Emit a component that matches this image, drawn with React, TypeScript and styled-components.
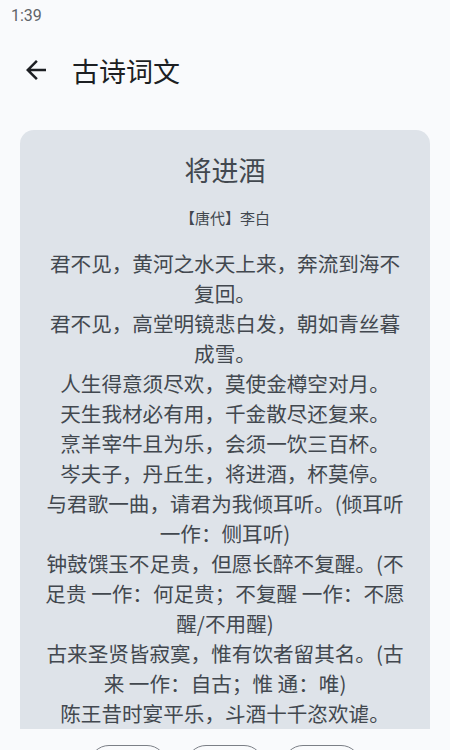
import styled, { createGlobalStyle } from "styled-components"

const GlobalStyle = createGlobalStyle`
  html, body {
    margin: 0;
    padding: 0;
    background: #f9fafc;
  }
`

const Root = styled.div`
  display: flex;
  flex-direction: column;
  width: 450px;
  height: 750px;
  overflow: hidden;
  background: #f9fafc;
  font-family: "Noto Sans CJK SC", "Noto Sans", sans-serif;
  & > * {
    flex-shrink: 0;
  }
`
const StatusBar = styled.div`
  height: 30px;
  display: flex;
  align-items: center;
  padding-left: 11px;
  font-family: Roboto, "Noto Sans", sans-serif;
  font-size: 16px;
  color: #606368;
`
const Toolbar = styled.div`
  height: 80px;
  display: flex;
  align-items: center;
  gap: 20px;
  padding-left: 20px;
`
const BackButton = styled.button`
  display: flex;
  align-items: center;
  justify-content: center;
  width: 32px;
  height: 32px;
  padding: 0;
  border: none;
  background: none;
  color: #1d1f23;
`
const PageTitle = styled.h1`
  margin: 0;
  font-size: 27px;
  font-weight: 400;
  color: #1d1f23;
`
const ScrollArea = styled.div`
  margin: 20px 20px 0;
  height: 599px;
  overflow: hidden;
`
const Card = styled.article`
  background: #dee3e9;
  border-radius: 14px;
  padding: 20px 24px 24px;
  text-align: center;
  color: #42484f;
`
const PoemTitle = styled.h2`
  margin: 0;
  font-size: 27px;
  line-height: 40px;
  font-weight: 400;
`
const Byline = styled.div`
  margin-top: 18px;
  font-size: 15px;
  line-height: 20px;
`
const Verse = styled.p`
  margin: 20px 0 0;
  font-size: 20.6px;
  line-height: 30px;
  white-space: pre-line;
`
const Actions = styled.div`
  display: flex;
  justify-content: center;
  gap: 19px;
  padding-top: 16px;
`
const Action = styled.button`
  width: 78px;
  height: 40px;
  border: 1px solid #7b7f86;
  border-radius: 20px;
  background: none;
  font-family: inherit;
  font-size: 14px;
  color: #3b4048;
`

const poem = [
  "君不见，黄河之水天上来，奔流到海不复回。",
  "君不见，高堂明镜悲白发，朝如青丝暮成雪。",
  "人生得意须尽欢，莫使金樽空对月。",
  "天生我材必有用，千金散尽还复来。",
  "烹羊宰牛且为乐，会须一饮三百杯。",
  "岑夫子，丹丘生，将进酒，杯莫停。",
  "与君歌一曲，请君为我倾耳听。(倾耳听 一作：侧耳听)",
  "钟鼓馔玉不足贵，但愿长醉不复醒。(不足贵 一作：何足贵；不复醒 一作：不愿醒/不用醒)",
  "古来圣贤皆寂寞，惟有饮者留其名。(古来 一作：自古；惟 通：唯)",
  "陈王昔时宴平乐，斗酒十千恣欢谑。",
  "主人何为言少钱，径须沽取对君酌。",
  "五花马，千金裘，呼儿将出换美酒，与尔同销万古愁。",
]

export default function App() {
  return (
    <Root>
      <GlobalStyle />
      <StatusBar>1:39</StatusBar>
      <Toolbar>
        <BackButton aria-label="返回">
          <svg width="30" height="30" viewBox="0 0 24 24" fill="currentColor">
            <path d="M20 11H7.83l5.59-5.59L12 4l-8 8 8 8 1.41-1.41L7.83 13H20v-2z" />
          </svg>
        </BackButton>
        <PageTitle>古诗词文</PageTitle>
      </Toolbar>
      <ScrollArea>
        <Card>
          <PoemTitle>将进酒</PoemTitle>
          <Byline>【唐代】李白</Byline>
          <Verse>{poem.join("\n")}</Verse>
        </Card>
      </ScrollArea>
      <Actions>
        <Action>复制</Action>
        <Action>收藏</Action>
        <Action>分享</Action>
      </Actions>
    </Root>
  )
}
